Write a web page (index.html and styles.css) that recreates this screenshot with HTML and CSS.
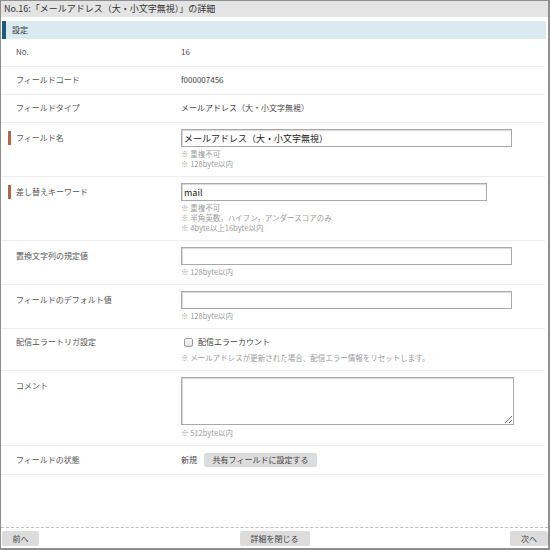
FILE: index.html
```html
<!DOCTYPE html>
<html lang="ja">
<head>
<meta charset="utf-8">
<title>詳細</title>
<link rel="stylesheet" href="styles.css">
</head>
<body>
<div class="frame">
  <div class="title">No.16:「メールアドレス（大・小文字無視）」の詳細</div>
  <div class="section">設定</div>
  <div class="rows">
    <div class="row">
      <div class="label short"><span class="mark"></span>No.</div>
      <div class="value text">16</div>
    </div>
    <div class="row">
      <div class="label short"><span class="mark"></span>フィールドコード</div>
      <div class="value text">f000007456</div>
    </div>
    <div class="row">
      <div class="label short"><span class="mark"></span>フィールドタイプ</div>
      <div class="value text">メールアドレス（大・小文字無視）</div>
    </div>
    <div class="row">
      <div class="label"><span class="mark on"></span>フィールド名</div>
      <div class="value">
        <input class="field wide" type="text" value="メールアドレス（大・小文字無視）">
        <div class="notes first">
          <div>※ 重複不可</div>
          <div>※ 128byte以内</div>
        </div>
      </div>
    </div>
    <div class="row">
      <div class="label"><span class="mark on"></span>差し替えキーワード</div>
      <div class="value">
        <input class="field mid" type="text" value="mail">
        <div class="notes first">
          <div>※ 重複不可</div>
          <div>※ 半角英数，ハイフン，アンダースコアのみ</div>
          <div>※ 4byte以上16byte以内</div>
        </div>
      </div>
    </div>
    <div class="row">
      <div class="label"><span class="mark"></span>置換文字列の規定値</div>
      <div class="value">
        <input class="field wide" type="text" value="">
        <div class="notes first"><div>※ 128byte以内</div></div>
      </div>
    </div>
    <div class="row">
      <div class="label"><span class="mark"></span>フィールドのデフォルト値</div>
      <div class="value">
        <input class="field wide" type="text" value="">
        <div class="notes first"><div>※ 128byte以内</div></div>
      </div>
    </div>
    <div class="row">
      <div class="label short"><span class="mark"></span>配信エラートリガ設定</div>
      <div class="value">
        <label class="check"><input type="checkbox" class="box">配信エラーカウント</label>
        <div class="notes after-check"><div>※ メールアドレスが更新された場合、配信エラー情報をリセットします。</div></div>
      </div>
    </div>
    <div class="row">
      <div class="label"><span class="mark"></span>コメント</div>
      <div class="value">
        <textarea class="area"></textarea>
        <div class="notes after-area"><div>※ 512byte以内</div></div>
      </div>
    </div>
    <div class="row">
      <div class="label btnrow"><span class="mark"></span>フィールドの状態</div>
      <div class="value state">
        <span>新規</span>
        <button class="btn share">共有フィールドに設定する</button>
      </div>
    </div>
  </div>
  <div class="spacer"></div>
  <div class="footer">
    <button class="btn foot prev">前へ</button>
    <button class="btn foot close">詳細を閉じる</button>
    <button class="btn foot next">次へ</button>
  </div>
</div>
</body>
</html>
```

FILE: styles.css
```css
* { box-sizing: border-box; }
html, body {
  margin: 0;
  padding: 0;
  background: #ffffff;
}
body {
  font-family: "Noto Sans CJK JP", "Noto Sans", sans-serif;
  font-size: 8px;
  color: #444;
}
.frame {
  width: 550px;
  height: 550px;
  border: 1px solid #8f8f8f;
  border-right-width: 2px;
  border-bottom-width: 2px;
  display: flex;
  flex-direction: column;
  background: #fff;
}
.title {
  height: 16px;
  line-height: 16px;
  background: #e4e4e4;
  padding-left: 3px;
  font-size: 9px;
  color: #333;
  white-space: nowrap;
}
.section {
  margin: 4px 2px 0 1px;
  height: 18px;
  line-height: 18px;
  background: #daeaf0;
  border-left: 4px solid #1d5a78;
  padding-left: 6px;
  font-size: 8px;
  color: #333;
}
.rows {
  display: flex;
  flex-direction: column;
  margin: 0 3px 0 0;
}
.row {
  display: grid;
  grid-template-columns: 180px 1fr;
  align-items: start;
  padding: 6px 0 7px;
  border-bottom: 1px solid #ececec;
}
.label {
  display: flex;
  align-items: center;
  line-height: 18px;
  padding-left: 7px;
  color: #555;
  white-space: nowrap;
}
.label.short { line-height: 14px; }
.label.btnrow { line-height: 15px; }
.mark {
  display: inline-block;
  width: 3px;
  height: 14px;
  margin-right: 5px;
  background: transparent;
}
.mark.on { background: #b6654a; }
.label.short .mark, .label.btnrow .mark { height: 10px; }
.value {
  display: flex;
  flex-direction: column;
  align-items: flex-start;
  color: #444;
}
.value.text { line-height: 14px; }
.field {
  height: 18px;
  border: 1px solid #a9a9a9;
  box-shadow: inset 1px 1px 1px #d8d8d8;
  font-family: "Noto Sans CJK JP", "Noto Sans", sans-serif;
  font-size: 9px;
  color: #222;
  padding: 0 2px;
  margin: 0;
  background: #fff;
  outline: none;
}
.field.wide { width: 331px; }
.field.mid { width: 306px; }
.notes {
  font-size: 7.5px;
  line-height: 10px;
  color: #9a9a9a;
  white-space: nowrap;
}
.notes.first { margin-top: 2px; }
.notes.after-check { margin-top: 4px; }
.notes.after-area { margin-top: 3px; }
.check {
  display: flex;
  align-items: center;
  line-height: 14px;
  color: #444;
}
.box {
  -webkit-appearance: none;
  appearance: none;
  width: 9px;
  height: 9px;
  margin: 0 5px 0 3px;
  border: 1px solid #9b9b9b;
  border-radius: 2px;
  background: linear-gradient(#fafafa, #e2e2e2);
}
.area {
  width: 333px;
  height: 48px;
  border: 1px solid #a9a9a9;
  box-shadow: inset 1px 1px 1px #d8d8d8;
  margin: 0;
  padding: 2px;
  font-family: "Noto Sans CJK JP", "Noto Sans", sans-serif;
  font-size: 9px;
  outline: none;
}
.value.state {
  flex-direction: row;
  align-items: center;
  gap: 7px;
  line-height: 15px;
}
.btn {
  font-family: "Noto Sans CJK JP", "Noto Sans", sans-serif;
  font-size: 8px;
  color: #444;
  background: #dcdcdc;
  border: none;
  border-radius: 2px;
  height: 14px;
  line-height: 14px;
  padding: 0;
  margin: 0;
  white-space: nowrap;
  text-align: center;
}
.btn.share { width: 113px; }
.spacer { flex: 1; }
.footer {
  border-top: 1px dashed #bdbdbd;
  display: flex;
  justify-content: space-between;
  align-items: center;
  padding: 3px 0 2px;
  margin: 0;
}
.btn.foot {
  height: 15px;
  line-height: 15px;
}
.btn.prev { width: 37px; margin-left: 1px; }
.btn.close { width: 70px; }
.btn.next { width: 38px; }
```
